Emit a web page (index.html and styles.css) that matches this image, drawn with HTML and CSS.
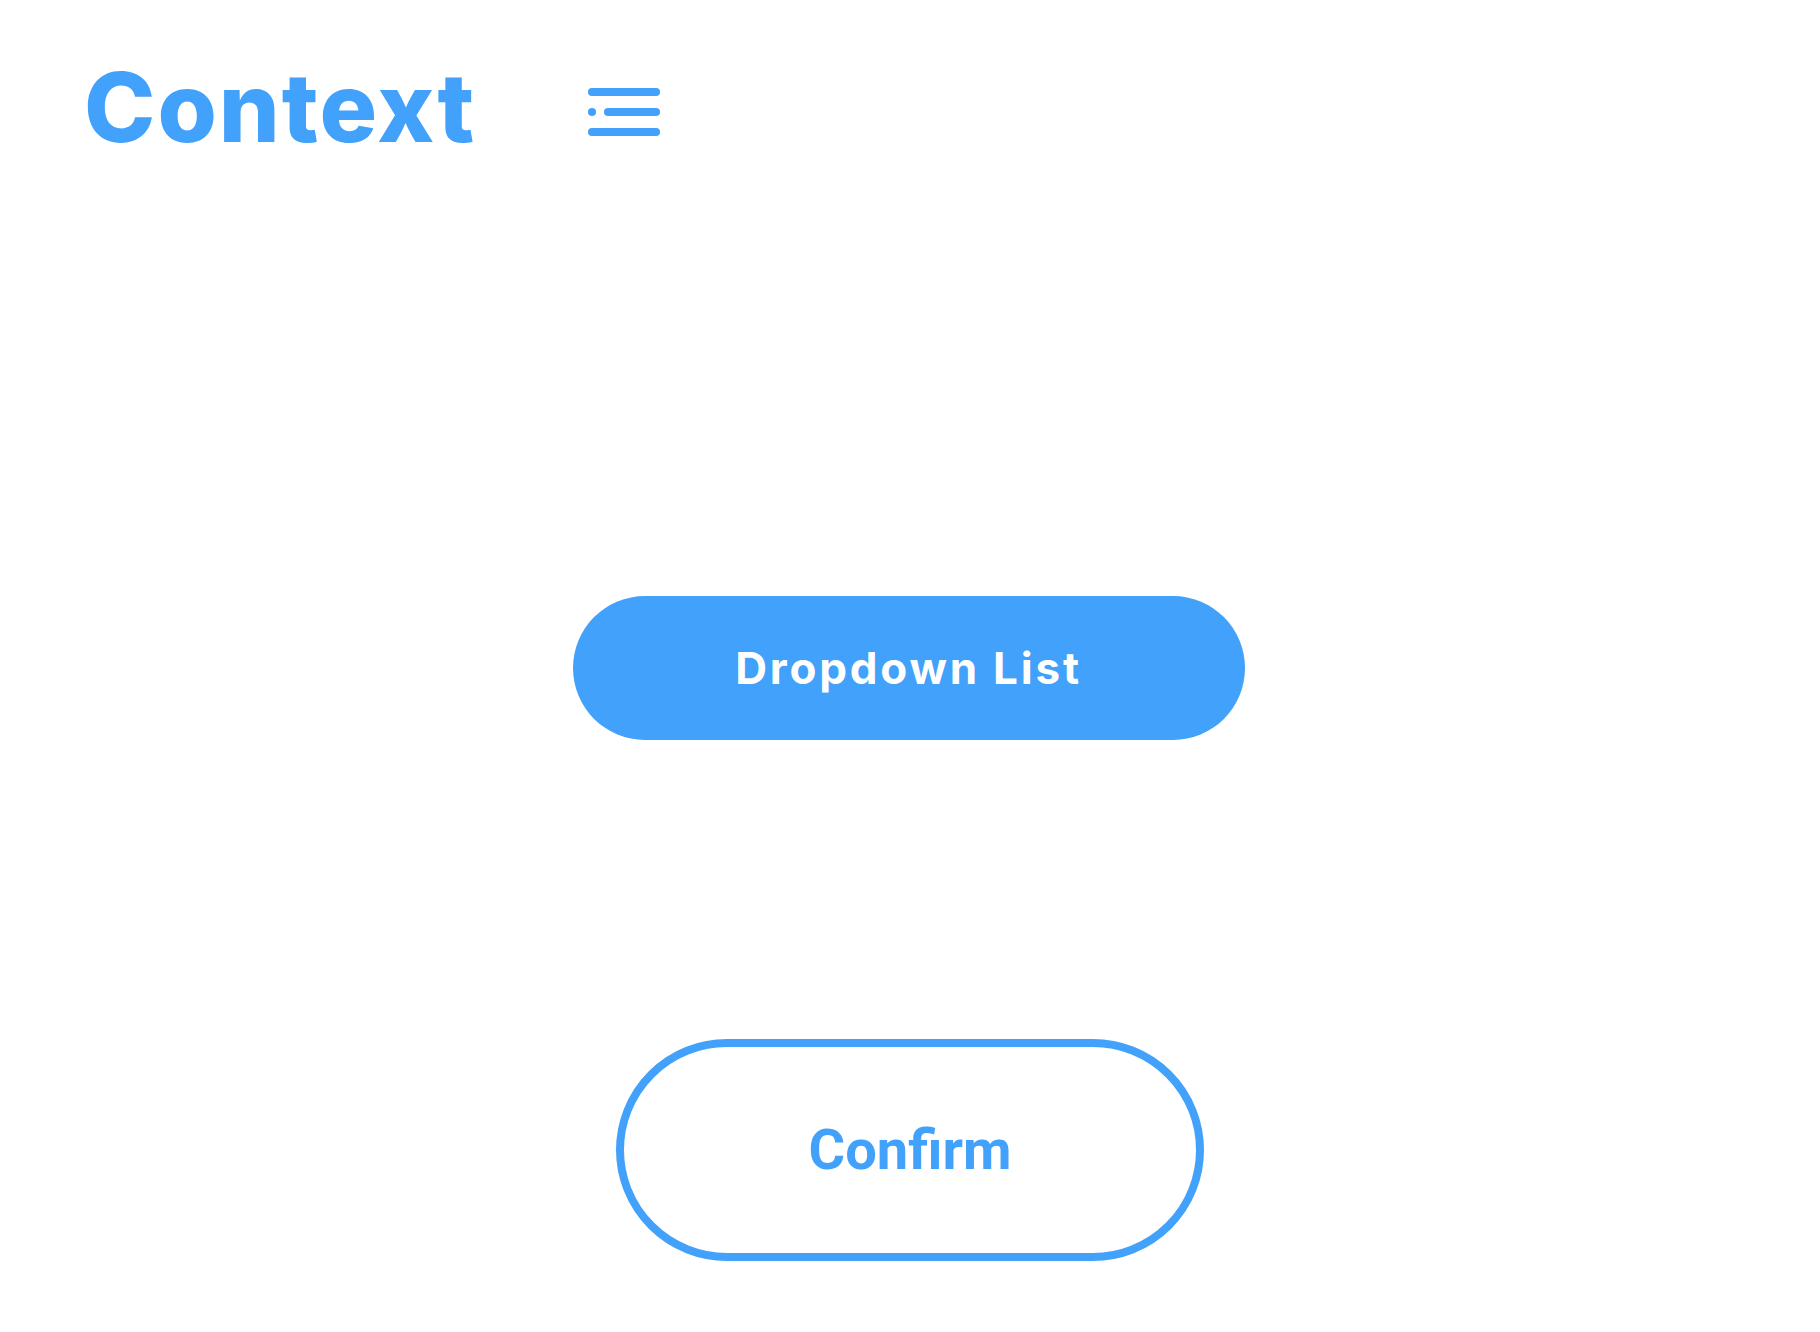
FILE: index.html
```html
<!DOCTYPE html>
<html lang="en">
<head>
<meta charset="utf-8">
<title>Context</title>
<link rel="stylesheet" href="styles.css">
</head>
<body>
<header class="topbar">
  <div class="logo">Context</div>
  <button class="menu-btn" aria-label="Menu">
    <svg width="72" height="48" viewBox="0 0 72 48">
      <line x1="4" y1="4" x2="68" y2="4" stroke="#41a1fb" stroke-width="8" stroke-linecap="round"/>
      <circle cx="4" cy="24" r="4" fill="#41a1fb"/>
      <line x1="20" y1="24" x2="68" y2="24" stroke="#41a1fb" stroke-width="8" stroke-linecap="round"/>
      <line x1="4" y1="44" x2="68" y2="44" stroke="#41a1fb" stroke-width="8" stroke-linecap="round"/>
    </svg>
  </button>
</header>
<main class="content">
  <button class="btn-dropdown">Dropdown List</button>
  <button class="btn-confirm">Confirm</button>
</main>
</body>
</html>
```
FILE: styles.css
```css
html, body {
  margin: 0;
  padding: 0;
  background: #ffffff;
}
body {
  width: 1820px;
  height: 1332px;
  font-family: "Inter", "Noto Sans", sans-serif;
}
.topbar {
  display: flex;
  align-items: flex-start;
  padding: 59px 0 0 84px;
}
.logo {
  font-family: "Inter", sans-serif;
  font-weight: 800;
  font-size: 96px;
  line-height: 96px;
  color: #41a1fb;
  letter-spacing: 2px;
  width: 391px;
}
.menu-btn {
  margin: 29px 0 0 113px;
  padding: 0;
  border: 0;
  background: none;
  width: 72px;
  height: 48px;
  display: block;
}
.menu-btn svg {
  display: block;
}
.content {
  display: flex;
  flex-direction: column;
  align-items: center;
}
.btn-dropdown {
  margin-top: 441px;
  margin-right: 3px;
  width: 672px;
  height: 144px;
  border: 0;
  border-radius: 72px;
  background: #41a1fb;
  color: #ffffff;
  font-family: "Inter", sans-serif;
  font-weight: 700;
  font-size: 44px;
  letter-spacing: 2.8px;
  padding: 0;
}
.btn-confirm {
  margin-top: 299px;
  width: 588px;
  height: 222px;
  border: 8px solid #41a1fb;
  border-radius: 111px;
  background: #ffffff;
  color: #41a1fb;
  font-family: "Roboto", sans-serif;
  font-weight: 700;
  font-size: 56px;
  padding: 0;
}
```
